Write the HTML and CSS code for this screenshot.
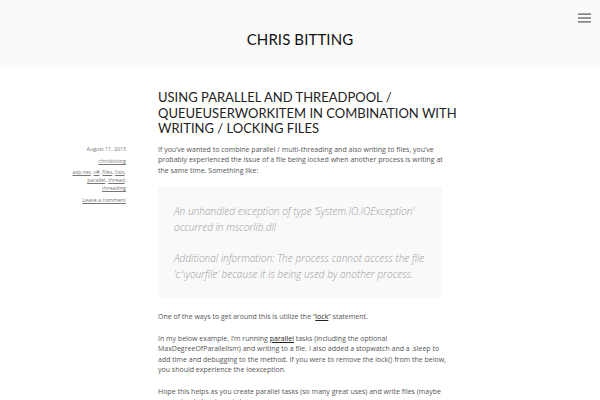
FILE: index.html
```html
<!DOCTYPE html>
<html>
<head>
<meta charset="utf-8">
<link rel="stylesheet" href="styles.css">
</head>
<body>
<header class="site-header">
  <h1 class="site-title">CHRIS BITTING</h1>
  <button class="menu-toggle" aria-label="Menu">
    <svg width="13" height="10" viewBox="0 0 13 10"><rect x="0" y="0.5" width="13" height="1.2" fill="#555"/><rect x="0" y="4.4" width="13" height="1.2" fill="#555"/><rect x="0" y="8.3" width="13" height="1.2" fill="#555"/></svg>
  </button>
</header>
<main class="site-main">
  <div class="post-head">
    <h2 class="entry-title">USING PARALLEL AND THREADPOOL / QUEUEUSERWORKITEM IN COMBINATION WITH WRITING / LOCKING FILES</h2>
  </div>
  <div class="post-body">
    <aside class="entry-meta">
      <div class="meta-date">August 11, 2015</div>
      <div class="meta-author"><a href="#">chrisbitting</a></div>
      <div class="meta-tags"><a href="#">asp.net</a>, <a href="#">c#</a>, <a href="#">files</a>, <a href="#">lists</a>, <a href="#">parallel</a>, <a href="#">thread</a>, <a href="#">threading</a></div>
      <div class="meta-comment"><a href="#">Leave a comment</a></div>
    </aside>
    <article class="entry-content">
      <p>If you’ve wanted to combine parallel / multi-threading and also writing to files, you’ve probably experienced the issue of a file being locked when another process is writing at the same time. Something like:</p>
      <blockquote>
        <p>An unhandled exception of type ‘System.IO.IOException’ occurred in mscorlib.dll</p>
        <p>Additional information: The process cannot access the file ‘c:\yourfile’ because it is being used by another process.</p>
      </blockquote>
      <p>One of the ways to get around this is utilize the “<a href="#">lock</a>” statement.</p>
      <p>In my below example, I’m running <a href="#">parallel</a> tasks (including the optional MaxDegreeOfParallelism) and writing to a file. I also added a stopwatch and a .sleep to add time and debugging to the method. If you were to remove the lock() from the below, you should experience the ioexception.</p>
      <p>Hope this helps as you create parallel tasks (so many great uses) and write files (maybe some simple logging, etc.)</p>
    </article>
  </div>
</main>
</body>
</html>
```
FILE: styles.css
```css
html, body { margin: 0; padding: 0; background: #fff; }
body { font-family: "Open Sans", "Noto Sans", sans-serif; color: #555; overflow: hidden; height: 400px; }
.site-header {
  background: #fafafa;
  height: 65px;
  display: flex;
  align-items: center;
  justify-content: center;
  position: relative;
}
.site-title {
  margin: 13px 0 0 0;
  font-family: Lato, "Open Sans", sans-serif;
  font-weight: 400;
  font-size: 15px;
  letter-spacing: 0.1px;
  color: #111;
}
.menu-toggle {
  position: absolute;
  top: 13px;
  right: 9px;
  background: none;
  border: 0;
  padding: 0;
  line-height: 0;
}
.site-main { padding-top: 25px; }
.post-head { padding-left: 158px; width: 306px; }
.entry-title {
  margin: 0;
  font-family: Lato, "Open Sans", sans-serif;
  font-weight: 400;
  font-size: 13px;
  line-height: 15.6px;
  color: #222;
}
.post-body { display: flex; margin-top: 8px; }
.entry-meta {
  width: 126px;
  text-align: right;
  font-size: 5.3px;
  line-height: 8px;
  color: #777;
}
.entry-meta a { color: #777; }
.meta-date { margin-bottom: 4px; }
.meta-author { margin-bottom: 3px; }
.meta-tags { width: 60px; margin-left: auto; margin-bottom: 4px; }
.entry-content {
  margin-left: 32px;
  width: 290px;
  font-size: 7px;
  line-height: 10.5px;
  color: #555;
}
.entry-content p { margin: 0 0 11px 0; }
.entry-content a { color: #222; text-decoration: underline; }
blockquote {
  margin: 3px 0 14px 0;
  width: 284px;
  box-sizing: border-box;
  background: #f9f9f9;
  padding: 17px 10px 16px 16px;
  font-style: italic;
  font-size: 10.1px;
  line-height: 15.5px;
  color: #999;
  font-weight: 300;
}
blockquote p { margin: 0 0 16px 0 !important; }
blockquote p:last-child { margin-bottom: 0 !important; }
```
